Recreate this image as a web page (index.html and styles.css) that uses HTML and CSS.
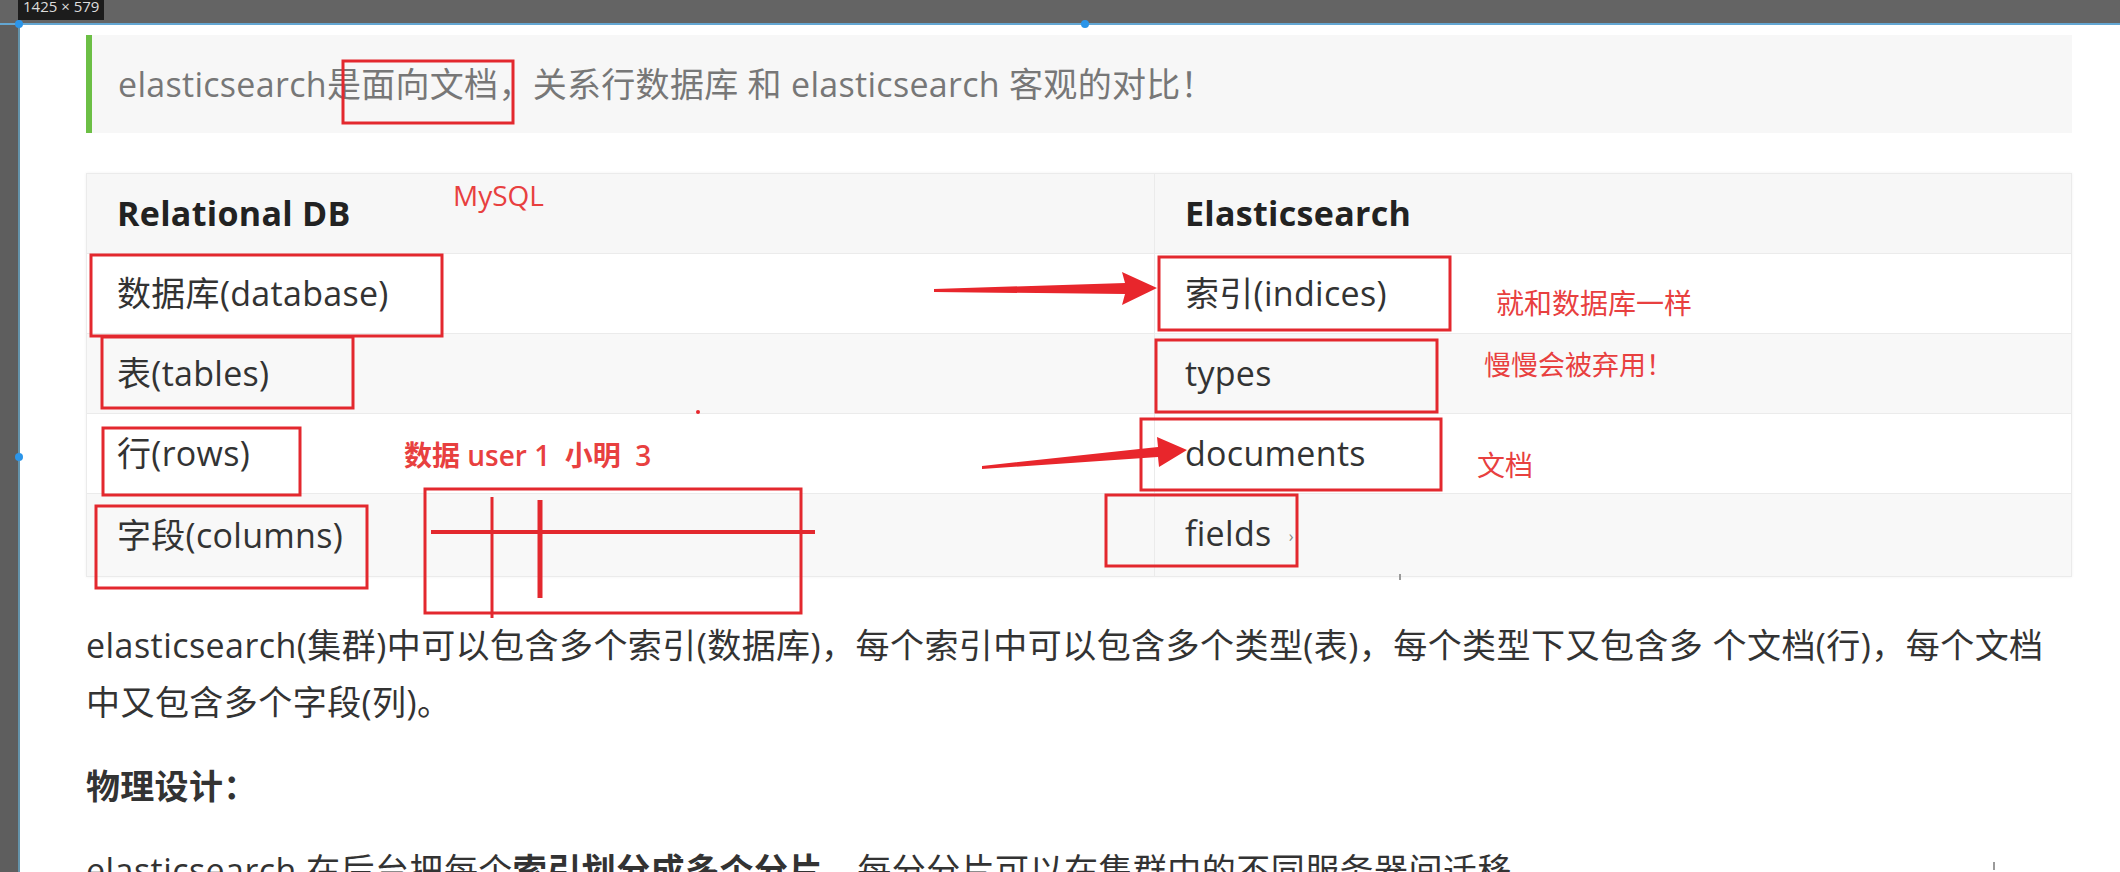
FILE: index.html
```html
<!DOCTYPE html>
<html lang="zh-CN">
<head>
  <meta charset="UTF-8">
  <title>ElasticSearch 核心概念</title>
  <link rel="stylesheet" href="styles.css">
</head>
<body>

<!-- barra del player / selezione -->
<div class="topbar">
  <span class="dims">1425 × 579</span>
</div>

<div class="frame">
  <div class="gutter"></div>

  <main class="doc">
    <blockquote class="note">
      elasticsearch是面向文档，关系行数据库 和 elasticsearch 客观的对比！
    </blockquote>

    <table class="compare">
      <thead>
        <tr><th>Relational DB</th><th>Elasticsearch</th></tr>
      </thead>
      <tbody>
        <tr><td>数据库(database)</td><td>索引(indices)</td></tr>
        <tr><td>表(tables)</td><td>types</td></tr>
        <tr><td>行(rows)</td><td>documents</td></tr>
        <tr><td>字段(columns)</td><td>fields <span class="caret">›</span></td></tr>
      </tbody>
    </table>

    <p class="text">elasticsearch(集群)中可以包含多个索引(数据库)，每个索引中可以包含多个类型(表)，每个类型下又包含多 个文档(行)，每个文档<br>中又包含多个字段(列)。</p>

    <h3 class="title">物理设计：</h3>

    <p class="text">elasticsearch 在后台把每个<strong>索引划分成多个分片</strong>，每分分片可以在集群中的不同服务器间迁移</p>
  </main>

  <!-- annotazioni rosse disegnate sopra la pagina -->
  <svg class="marks" width="2120" height="872" viewBox="0 0 2120 872">
    <g fill="none" stroke="#e3282e" stroke-width="3">
      <rect x="343" y="61" width="170" height="62"/>
      <rect x="91" y="255" width="351" height="81"/>
      <rect x="102" y="337" width="251" height="71"/>
      <rect x="103" y="428" width="197" height="67"/>
      <rect x="96" y="506" width="271" height="82"/>
      <rect x="425" y="489" width="376" height="124"/>
      <rect x="1159" y="257" width="291" height="73"/>
      <rect x="1156" y="340" width="281" height="72"/>
      <rect x="1141" y="419" width="300" height="71"/>
      <rect x="1106" y="495" width="191" height="71"/>
      <line x1="431" y1="532" x2="815" y2="532" stroke-width="4"/>
      <line x1="492" y1="497" x2="492" y2="618"/>
      <line x1="540" y1="500" x2="540" y2="598" stroke-width="5"/>
    </g>
    <g fill="#e8262c">
      <polygon points="934,289 1125,283 1122,272 1157,288 1122,305 1125,294 934,292"/>
      <polygon points="982,466 1158,447 1157,437 1187,450 1159,467 1158,457 982,469"/>
      <circle cx="698" cy="412" r="2"/>
    </g>
    <g fill="#2b95e9">
      <circle cx="19" cy="24" r="4"/>
      <circle cx="1085" cy="24" r="4"/>
      <circle cx="19" cy="457" r="4"/>
    </g>
    <g fill="#9a9a9a">
      <rect x="1399" y="574" width="2" height="6"/>
      <rect x="1993" y="862" width="2" height="8"/>
    </g>
  </svg>

  <span class="memo memo-mysql">MySQL</span>
  <span class="memo memo-row">数据 user 1  小明  3</span>
  <span class="memo memo-index">就和数据库一样</span>
  <span class="memo memo-type">慢慢会被弃用！</span>
  <span class="memo memo-doc">文档</span>
</div>

</body>
</html>
```

FILE: styles.css
```css
body {
  margin: 0;
  padding: 0;
  font-family: "Open Sans", "Noto Sans CJK SC", sans-serif;
  background-color: #fff;
  color: #333;
  overflow: hidden;
}

/* Barra superiore */
.topbar {
  display: flex;
  align-items: flex-start;
  height: 23px;
  padding-left: 18px;
  background-color: #646464;
  border-bottom: 2px solid #63a6d2;
}

.dims {
  height: 20px;
  padding: 0 5px;
  background-color: #1c1c1c;
  color: #dcdcdc;
  font-size: 15px;
  line-height: 13px;
  overflow: hidden;
}

.frame {
  position: relative;
  display: flex;
  height: 847px;
}

.gutter {
  width: 18px;
  background-color: #5e5e5e;
  border-right: 2px solid #6493aa;
}

.doc {
  flex: 1;
  padding: 10px 48px 0 66px;
  font-size: 34px;
  letter-spacing: 0.3px;
}

/* Citazione */
.note {
  margin: 0;
  padding: 24px 26px;
  line-height: 50px;
  background-color: #f7f7f7;
  border-left: 6px solid #6cbf45;
  color: #777;
}

/* Tabella di confronto */
.compare {
  width: 100%;
  margin-top: 40px;
  border-collapse: collapse;
  border: 1px solid #ebebeb;
  box-shadow: 0 0 3px rgba(0, 0, 0, 0.06);
}

.compare th,
.compare td {
  padding: 14px 30px;
  line-height: 51px;
  text-align: left;
  border-top: 1px solid #ebebeb;
}

.compare th + th,
.compare td + td {
  width: 856px;
  border-left: 1px solid #ebebeb;
}

.compare th {
  background-color: #f7f7f7;
  color: #222;
  font-weight: 700;
}

.compare td {
  color: #333;
}

.compare tbody tr:nth-child(even) td {
  background-color: #f8f8f8;
}

.caret {
  margin-left: 8px;
  font-size: 16px;
  color: #888;
  vertical-align: middle;
}

/* Testo */
.text {
  margin: 40px 0 0;
  line-height: 57px;
  color: #333;
  letter-spacing: 0.45px;
}

.title {
  margin: 30px 0 0;
  font-size: 34px;
  line-height: 50px;
  font-weight: 700;
  color: #333;
}

.title + .text {
  margin-top: 31px;
}

/* Annotazioni */
.marks {
  position: absolute;
  top: -25px;
  left: 0;
  pointer-events: none;
}

.memo {
  position: absolute;
  color: #e8403f;
  font-size: 28px;
  line-height: 28px;
  white-space: pre;
}

.memo-mysql {
  left: 453px;
  top: 156px;
  font-size: 28px;
}

.memo-row {
  left: 404px;
  top: 416px;
  font-size: 28px;
  font-weight: 600;
}

.memo-index {
  left: 1496px;
  top: 264px;
}

.memo-type {
  left: 1484px;
  top: 326px;
  font-size: 27px;
}

.memo-doc {
  left: 1477px;
  top: 426px;
}
```
